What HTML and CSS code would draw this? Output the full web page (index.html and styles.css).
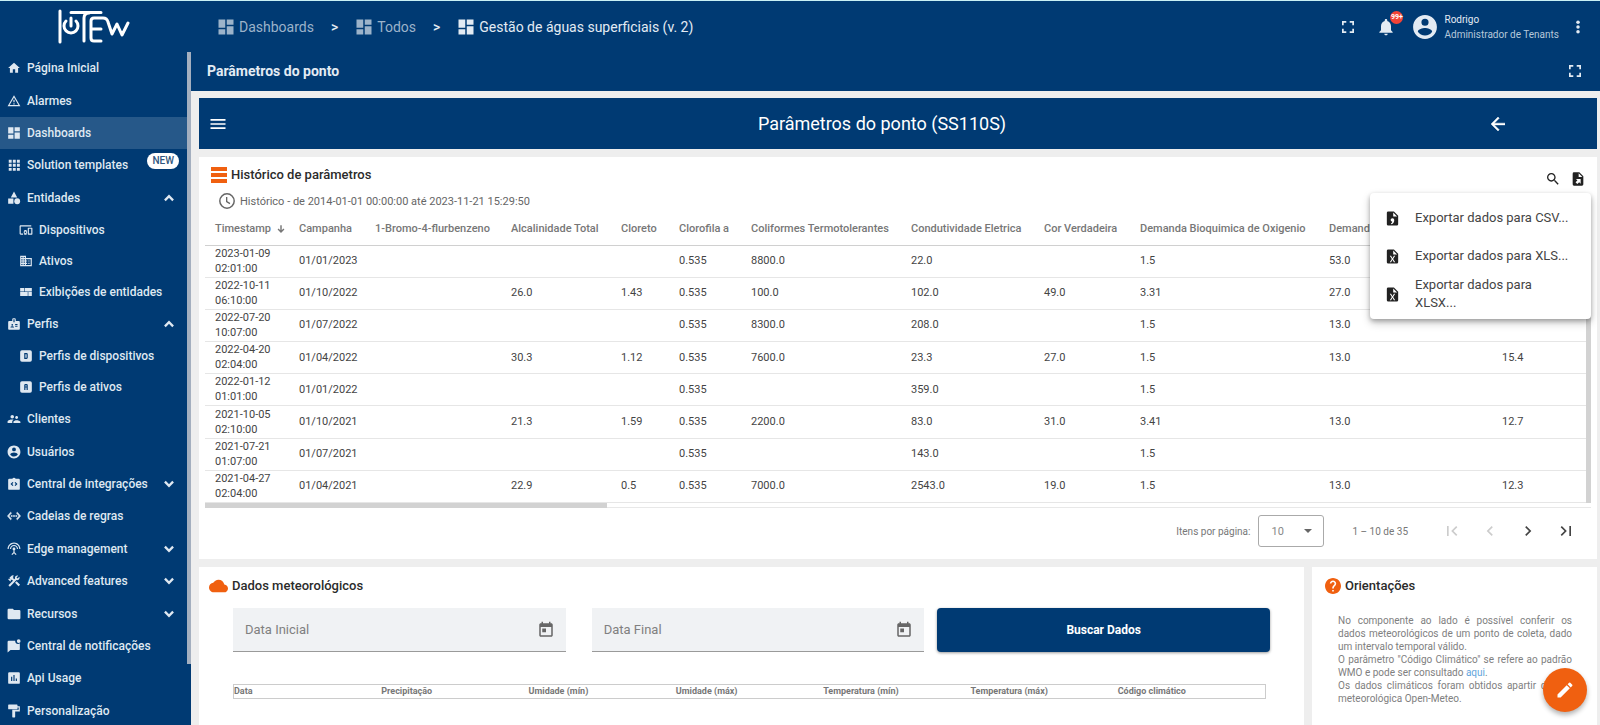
FILE: index.html
```html
<!DOCTYPE html>
<html lang="pt-BR">
<head>
<meta charset="utf-8">
<title>IoTEW - Parâmetros do ponto</title>
<link rel="stylesheet" href="styles.css">
</head>
<body>
<svg class="sprite" aria-hidden="true">
  <symbol id="home" viewBox="0 0 24 24"><path d="M10 20v-6h4v6h5v-8h3L12 3 2 12h3v8z"/></symbol>
  <symbol id="warn" viewBox="0 0 24 24"><path d="M12 5.99L19.53 19H4.47L12 5.99M12 2L1 21h22L12 2zm1 14h-2v2h2v-2zm0-6h-2v4h2v-4z"/></symbol>
  <symbol id="dash" viewBox="0 0 24 24"><path d="M2 13h9V2H2v11zm0 9h9v-7H2v7zm11 0h9V11h-9v11zm0-20v7h9V2h-9z"/></symbol>
  <symbol id="apps" viewBox="0 0 24 24"><path d="M3 3h5v5H3zM10 3h5v5h-5zM17 3h5v5h-5zM3 10h5v5H3zM10 10h5v5h-5zM17 10h5v5h-5zM3 17h5v5H3zM10 17h5v5h-5zM17 17h5v5h-5z"/></symbol>
  <symbol id="category" viewBox="0 0 24 24"><path d="M12 1l-5.500 10h11zM2 13h9v9H2z"/><circle cx="17.500" cy="17.500" r="5"/></symbol>
  <symbol id="devices" viewBox="0 0 24 24"><path d="M3 6h18V4H3c-1.100 0-2 .9-2 2v12c0 1.100.9 2 2 2h4v-2H3V6zm10 6H9v1.780c-.61.55-1 1.330-1 2.220s.39 1.670 1 2.220V20h4v-1.780c.61-.55 1-1.340 1-2.220s-.39-1.670-1-2.220V12zm-2 5.500c-.83 0-1.500-.67-1.500-1.500s.67-1.500 1.500-1.500 1.500.67 1.500 1.500-.67 1.500-1.500 1.500zM22 8h-6c-.5 0-1 .5-1 1v10c0 .5.5 1 1 1h6c.5 0 1-.5 1-1V9c0-.5-.5-1-1-1zm-1 10h-4v-8h4v8z"/></symbol>
  <symbol id="domain" viewBox="0 0 24 24"><path d="M12 7V3H2v18h20V7H12zM6 19H4v-2h2v2zm0-4H4v-2h2v2zm0-4H4V9h2v2zm0-4H4V5h2v2zm4 12H8v-2h2v2zm0-4H8v-2h2v2zm0-4H8V9h2v2zm0-4H8V5h2v2zm10 12h-8v-2h2v-2h-2v-2h2v-2h-2V9h8v10zm-2-8h-2v2h2v-2zm0 4h-2v2h2v-2z"/></symbol>
  <symbol id="quilt" viewBox="0 0 24 24"><path d="M2 5h7v6H2zM10 5h12v6H10zM2 12h13v7H2zM16 12h6v7h-6z"/></symbol>
  <symbol id="badge" viewBox="0 0 24 24"><path d="M20 7h-5V4c0-1.100-.9-2-2-2h-2c-1.100 0-2 .9-2 2v3H4c-1.100 0-2 .9-2 2v11c0 1.100.9 2 2 2h16c1.100 0 2-.9 2-2V9c0-1.100-.9-2-2-2zM9 12c.83 0 1.500.67 1.500 1.500S9.830 15 9 15s-1.500-.67-1.500-1.500S8.170 12 9 12zm3 6H6v-.75c0-1 2-1.500 3-1.500s3 .5 3 1.500V18zm1-9h-2V4h2v5zm5 7.500h-4V15h4v1.500zm0-3h-4V12h4v1.500z"/></symbol>
  <symbol id="boxd" viewBox="0 0 24 24"><path fill-rule="evenodd" d="M9 7v10h4a2 2 0 0 0 2-2V9a2 2 0 0 0-2-2H9zm2 2h2v6h-2zM5 2h14a3 3 0 0 1 3 3v14a3 3 0 0 1-3 3H5a3 3 0 0 1-3-3V5a3 3 0 0 1 3-3z"/></symbol>
  <symbol id="boxa" viewBox="0 0 24 24"><path fill-rule="evenodd" d="M11 7a2 2 0 0 0-2 2v8h2v-4h2v4h2V9a2 2 0 0 0-2-2zm0 2h2v2h-2zM5 2h14a3 3 0 0 1 3 3v14a3 3 0 0 1-3 3H5a3 3 0 0 1-3-3V5a3 3 0 0 1 3-3z"/></symbol>
  <symbol id="people" viewBox="0 0 24 24"><path d="M16.500 12c1.380 0 2.490-1.120 2.490-2.500S17.880 7 16.500 7C15.120 7 14 8.120 14 9.500s1.120 2.500 2.500 2.500zM9 11c1.660 0 2.990-1.340 2.990-3S10.660 5 9 5C7.340 5 6 6.340 6 8s1.340 3 3 3zm7.500 3c-1.830 0-5.500.92-5.500 2.750V19h12v-2.250c0-1.830-4.670-2.750-6.500-2.750zM9 13c-2.330 0-8 1.170-8 3.500V19h8v-2.250c0-.85.33-2.340 2.370-3.470C10.500 13.100 9.660 13 9 13z"/></symbol>
  <symbol id="account" viewBox="0 0 24 24"><path d="M12 1C5.900 1 1 5.900 1 12s4.900 11 11 11 11-4.900 11-11S18.100 1 12 1zm0 3.300a3.300 3.300 0 1 1 0 6.600 3.300 3.300 0 0 1 0-6.600zm0 15.600c-2.750 0-5.180-1.400-6.600-3.540.03-2.190 4.400-3.390 6.600-3.390s6.570 1.200 6.600 3.390A7.900 7.900 0 0 1 12 19.900z"/></symbol>
  <symbol id="integr" viewBox="0 0 24 24"><path fill-rule="evenodd" d="M20 3h-5.200a3 3 0 0 0-5.600 0H4a2 2 0 0 0-2 2v15a2 2 0 0 0 2 2h16a2 2 0 0 0 2-2V5a2 2 0 0 0-2-2zM11 14.200L9.600 15.600 6 12l3.600-3.600L11 9.800 8.800 12zm3.400 1.400L13 14.200l2.200-2.200L13 9.800l1.400-1.400L18 12z"/></symbol>
  <symbol id="rules" viewBox="0 0 24 24"><path d="M7.770 6.760L6.230 5.480.82 12l5.410 6.520 1.540-1.280L3.420 12l4.350-5.240zM7 13h2v-2H7v2zm10-2h-2v2h2v-2zm-6 2h2v-2h-2v2zm6.770-7.520l-1.540 1.280L20.580 12l-4.350 5.240 1.540 1.280L23.180 12l-5.410-6.520z" stroke="currentColor"/></symbol>
  <symbol id="antenna" viewBox="0 0 24 24"><path d="M12 5c-3.870 0-7 3.130-7 7h2c0-2.760 2.240-5 5-5s5 2.240 5 5h2c0-3.870-3.130-7-7-7zm1 9.290c.88-.39 1.500-1.260 1.500-2.290 0-1.380-1.120-2.500-2.500-2.500S9.500 10.620 9.500 12c0 1.020.62 1.900 1.500 2.290v3.300L7.590 21 9 22.410l3-3 3 3L16.410 21 13 17.590v-3.300zM12 1C5.930 1 1 5.930 1 12h2c0-4.970 4.030-9 9-9s9 4.030 9 9h2c0-6.070-4.930-11-11-11z"/></symbol>
  <symbol id="tools" viewBox="0 0 24 24"><path d="M13.800 15.200l2.600-2.600 6 6-2.600 2.600zM17.500 10.500c2.200 0 4-1.570 4-4 0-.58-.16-1.120-.41-1.600l-2.900 2.900-1.890-1.890 2.900-2.900c-.48-.25-1.020-.41-1.600-.41-2.200 0-4 1.570-4 4 0 .41.080.8.210 1.160l-1.450 1.450-1.780-1.780.71-.71-1.410-1.410L12 3.100a3 3 0 0 0-4.240 0L4.220 6.640l1.410 1.410H2.810l-.91.910 3.740 3.740.91-.91V9.150l1.210 1.210.71-.71 1.780 1.780-7.810 7.810 2.520 2.520L16.340 10.290c.36.130.75.210 1.160.21z"/></symbol>
  <symbol id="folder" viewBox="0 0 24 24"><path d="M10 3H3a2 2 0 0 0-2 2v14a2 2 0 0 0 2 2h18a2 2 0 0 0 2-2V7a2 2 0 0 0-2-2h-9z"/></symbol>
  <symbol id="chat" viewBox="0 0 24 24"><path d="M22 7.400V17a2 2 0 0 1-2 2H6l-5 4V5a2 2 0 0 1 2-2h11.100A5 5 0 0 0 19 8.400c1.130 0 2.160-.39 3-1z"/><circle cx="20" cy="3.600" r="3.200"/></symbol>
  <symbol id="chart" viewBox="0 0 24 24"><path d="M20 2H4a2 2 0 0 0-2 2v16a2 2 0 0 0 2 2h16a2 2 0 0 0 2-2V4a2 2 0 0 0-2-2zM9 17H7v-7h2v7zm4 0h-2V7h2v10zm4 0h-2v-4h2v4z"/></symbol>
  <symbol id="paint" viewBox="0 0 24 24"><path d="M18 4V2c0-.55-.45-1-1-1H3c-.55 0-1 .45-1 1v6c0 .55.45 1 1 1h14c.55 0 1-.45 1-1V6h2v4H9v12c0 .55.45 1 1 1h3c.55 0 1-.45 1-1v-9h8V4h-4z"/></symbol>
  <symbol id="up" viewBox="0 0 24 24"><path d="M5 16l7-7 7 7" fill="none" stroke="currentColor" stroke-width="4"/></symbol>
  <symbol id="down" viewBox="0 0 24 24"><path d="M5 8l7 7 7-7" fill="none" stroke="currentColor" stroke-width="4"/></symbol>
  <symbol id="full" viewBox="5 5 14 14"><path d="M7 14H5v5h5v-2H7v-3zm-2-4h2V7h3V5H5v5zm12 7h-3v2h5v-5h-2v3zM14 5v2h3v3h2V5h-5z"/></symbol>
  <symbol id="bell" viewBox="0 0 24 24"><path d="M12 22c1.100 0 2-.9 2-2h-4c0 1.100.89 2 2 2zm6-6v-5c0-3.070-1.640-5.640-4.500-6.320V4c0-.83-.67-1.500-1.500-1.500s-1.500.67-1.500 1.500v.68C7.630 5.360 6 7.920 6 11v5l-2 2v1h16v-1l-2-2z"/></symbol>
  <symbol id="dots" viewBox="0 0 24 24"><circle cx="12" cy="4" r="3"/><circle cx="12" cy="12" r="3"/><circle cx="12" cy="20" r="3"/></symbol>
  <symbol id="menu" viewBox="0 0 24 24"><path d="M3 18h18v-2H3v2zm0-5h18v-2H3v2zm0-7v2h18V6H3z"/></symbol>
  <symbol id="back" viewBox="4 4 16 16"><path d="M20 11H7.830l5.590-5.590L12 4l-8 8 8 8 1.410-1.410L7.830 13H20v-2z" stroke="currentColor" stroke-width=".5"/></symbol>
  <symbol id="search" viewBox="0 0 24 24"><path d="M15.500 14h-.79l-.28-.27C15.410 12.590 16 11.110 16 9.500 16 5.910 13.090 3 9.500 3S3 5.910 3 9.500 5.910 16 9.500 16c1.610 0 3.090-.59 4.230-1.570l.27.28v.79l5 4.990L20.490 19l-4.990-5zm-6 0C7.010 14 5 11.990 5 9.500S7.010 5 9.500 5 14 7.010 14 9.500 11.990 14 9.500 14z"/></symbol>
  <symbol id="export" viewBox="0 0 24 24"><path fill-rule="evenodd" d="M6 2a2 2 0 0 0-2 2v16a2 2 0 0 0 2 2h12a2 2 0 0 0 2-2V8l-6-6zM13 3.500L18.500 9H13zM9 12h7v7l-2.200-2.200-2.800 2.800-2.700-2.700 2.800-2.800z"/></symbol>
  <symbol id="csv" viewBox="0 0 24 24"><path fill-rule="evenodd" d="M6 2a2 2 0 0 0-2 2v16a2 2 0 0 0 2 2h12a2 2 0 0 0 2-2V8l-6-6zM13 3.500L18.500 9H13zM12 11.500a2.500 2.500 0 0 1 2.500 2.500c0 3-1.500 5-4 6.200l-.8-1.300c1.300-.7 1.900-1.500 2-2.400A2.500 2.500 0 0 1 12 11.500z"/></symbol>
  <symbol id="xls" viewBox="0 0 24 24"><path fill-rule="evenodd" d="M6 2a2 2 0 0 0-2 2v16a2 2 0 0 0 2 2h12a2 2 0 0 0 2-2V8l-6-6zM15.800 20H14l-2-3.400-2 3.400H8.200l2.900-4.500L8.200 11H10l2 3.400 2-3.400h1.800l-2.900 4.500zM13 9V3.500L18.500 9z"/></symbol>
  <symbol id="clock" viewBox="0 0 24 24"><circle cx="12" cy="12" r="10.800" fill="none" stroke="currentColor" stroke-width="2.200"/><path d="M11.500 6v7l5 3" fill="none" stroke="currentColor" stroke-width="2"/></symbol>
  <symbol id="sort" viewBox="0 0 24 24"><path d="M12 3v16M5 12l7 7 7-7" fill="none" stroke="currentColor" stroke-width="3.500"/></symbol>
  <symbol id="bars" viewBox="0 0 16 16"><path d="M0 0h16v4H0zM0 6h16v4H0zM0 12h16v4H0z"/></symbol>
  <symbol id="cloud" viewBox="0 4 24 16"><path d="M19.350 10.040C18.670 6.590 15.640 4 12 4 9.110 4 6.600 5.640 5.350 8.040 2.340 8.360 0 10.910 0 14c0 3.310 2.690 6 6 6h13c2.760 0 5-2.240 5-5 0-2.640-2.050-4.780-4.650-4.960z"/></symbol>
  <symbol id="help" viewBox="2 2 20 20"><path d="M12 2C6.480 2 2 6.480 2 12s4.480 10 10 10 10-4.480 10-10S17.520 2 12 2zm1 17h-2v-2h2v2zm2.070-7.750l-.9.920C13.450 12.900 13 13.500 13 15h-2v-.5c0-1.100.45-2.100 1.170-2.830l1.240-1.260c.37-.36.59-.86.59-1.410 0-1.100-.9-2-2-2s-2 .9-2 2H8c0-2.210 1.790-4 4-4s4 1.790 4 4c0 .88-.36 1.680-.93 2.250z"/></symbol>
  <symbol id="cal" viewBox="0 0 24 24"><path d="M19 3h-1V1h-2v2H8V1H6v2H5c-1.110 0-2 .9-2 2v14c0 1.100.89 2 2 2h14c1.100 0 2-.9 2-2V5c0-1.100-.9-2-2-2zm0 16H5V8h14v11zM7 10h5v5H7z"/></symbol>
  <symbol id="edit" viewBox="0 0 24 24"><path d="M3 17.250V21h3.750L17.810 9.940l-3.750-3.750L3 17.250zM20.710 7.040a1 1 0 0 0 0-1.410l-2.340-2.340a1 1 0 0 0-1.410 0l-1.830 1.830 3.750 3.750 1.830-1.830z"/></symbol>
  <symbol id="first" viewBox="0 0 24 24"><path d="M18.400 16.600L13.800 12l4.600-4.600L17 6l-6 6 6 6zM6 6h2v12H6z"/></symbol>
  <symbol id="prev" viewBox="0 0 24 24"><path d="M15.400 7.400L14 6l-6 6 6 6 1.400-1.400L10.800 12z"/></symbol>
  <symbol id="next" viewBox="0 0 24 24"><path d="M10 6L8.600 7.400l4.600 4.600-4.600 4.600L10 18l6-6z"/></symbol>
  <symbol id="last" viewBox="0 0 24 24"><path d="M5.600 7.400l4.600 4.600-4.600 4.600L7 18l6-6-6-6zM16 6h2v12h-2z"/></symbol>
</svg>

<div class="app">
  <aside class="sidebar">
    <a class="logo" href="#" aria-label="IoTEW">
      <svg viewBox="0 0 72 36">
        <path d="M2 2v31"/>
        <path d="M8 12a7 7 0 1 0 10 0M13 9v8"/>
        <path d="M13 3.500h30M26 32V9q0-5 5-5"/>
        <path d="M43 32h-7q-3 0-3-3V12q0-3 3-3h9q4 0 5 4l4 12 5-10 5 11 6-12M33 20h10"/>
      </svg>
    </a>
    <div class="nav-scroll">
      <nav class="nav">
        <a href="#"><svg><use href="#home"/></svg>Página Inicial</a>
        <a href="#"><svg><use href="#warn"/></svg>Alarmes</a>
        <a href="#" class="active"><svg><use href="#dash"/></svg>Dashboards</a>
        <a href="#"><svg><use href="#apps"/></svg>Solution templates<span class="new">NEW</span></a>
        <button type="button"><svg><use href="#category"/></svg>Entidades<svg class="chev"><use href="#up"/></svg></button>
        <a href="#" class="sub"><svg><use href="#devices"/></svg>Dispositivos</a>
        <a href="#" class="sub"><svg><use href="#domain"/></svg>Ativos</a>
        <a href="#" class="sub"><svg><use href="#quilt"/></svg>Exibições de entidades</a>
        <button type="button"><svg><use href="#badge"/></svg>Perfis<svg class="chev"><use href="#up"/></svg></button>
        <a href="#" class="sub"><svg><use href="#boxd"/></svg>Perfis de dispositivos</a>
        <a href="#" class="sub"><svg><use href="#boxa"/></svg>Perfis de ativos</a>
        <a href="#"><svg><use href="#people"/></svg>Clientes</a>
        <a href="#"><svg><use href="#account"/></svg>Usuários</a>
        <button type="button"><svg><use href="#integr"/></svg>Central de integrações<svg class="chev"><use href="#down"/></svg></button>
        <a href="#"><svg><use href="#rules"/></svg>Cadeias de regras</a>
        <button type="button"><svg><use href="#antenna"/></svg>Edge management<svg class="chev"><use href="#down"/></svg></button>
        <button type="button"><svg><use href="#tools"/></svg>Advanced features<svg class="chev"><use href="#down"/></svg></button>
        <button type="button"><svg><use href="#folder"/></svg>Recursos<svg class="chev"><use href="#down"/></svg></button>
        <a href="#"><svg><use href="#chat"/></svg>Central de notificações</a>
        <a href="#"><svg><use href="#chart"/></svg>Api Usage</a>
        <a href="#"><svg><use href="#paint"/></svg>Personalização</a>
      </nav>
      <div class="nav-track"><div class="nav-thumb"></div></div>
    </div>
  </aside>

  <div class="page">
    <header class="topbar">
      <nav class="crumbs">
        <a href="#"><svg><use href="#dash"/></svg>Dashboards</a><span class="sep">&gt;</span>
        <a href="#"><svg><use href="#dash"/></svg>Todos</a><span class="sep">&gt;</span>
        <a href="#" class="current"><svg><use href="#dash"/></svg>Gestão de águas superficiais (v. 2)</a>
      </nav>
      <div class="tools">
        <button type="button" aria-label="Tela cheia"><svg class="i12"><use href="#full"/></svg></button>
        <button type="button" class="bell" aria-label="Notificações"><svg class="i20"><use href="#bell"/></svg><span class="count">99+</span></button>
        <div class="user"><svg><use href="#account"/></svg><div>Rodrigo<span class="role">Administrador de Tenants</span></div></div>
        <button type="button" class="more" aria-label="Mais"><svg class="i14"><use href="#dots"/></svg></button>
      </div>
    </header>
    <div class="statebar">
      <h1>Parâmetros do ponto</h1>
      <button type="button" aria-label="Expandir"><svg class="i12"><use href="#full"/></svg></button>
    </div>

    <main class="board">
      <section class="banner">
        <button type="button" aria-label="Menu"><svg class="i20"><use href="#menu"/></svg></button>
        <h2>Parâmetros do ponto (SS110S)</h2>
        <button type="button" aria-label="Voltar"><svg class="i14"><use href="#back"/></svg></button>
      </section>

      <section class="card history">
        <div class="card-head">
          <h3><svg class="i16"><use href="#bars"/></svg>Histórico de parâmetros</h3>
          <div class="actions">
            <button type="button" aria-label="Buscar"><svg class="i16"><use href="#search"/></svg></button>
            <button type="button" aria-label="Exportar"><svg class="i16"><use href="#export"/></svg></button>
            <div class="export-menu" role="menu">
              <button type="button" role="menuitem"><svg><use href="#csv"/></svg><span>Exportar dados para CSV...</span></button>
              <button type="button" role="menuitem"><svg><use href="#xls"/></svg><span>Exportar dados para XLS...</span></button>
              <button type="button" role="menuitem"><svg><use href="#xls"/></svg><span>Exportar dados para XLSX...</span></button>
            </div>
          </div>
        </div>
        <div class="period"><svg class="i16"><use href="#clock"/></svg>Histórico - de 2014-01-01 00:00:00 até 2023-11-21 15:29:50</div>
        <div class="grid-wrap">
          <div class="grid-view">
            <table class="grid">
              <colgroup><col class="w84"><col class="w76"><col class="w136"><col class="w110"><col class="w58"><col class="w72"><col class="w160"><col class="w133"><col class="w96"><col class="w189"><col class="w173"><col></colgroup>
              <thead><tr><th><span class="sorted">Timestamp<svg><use href="#sort"/></svg></span></th><th>Campanha</th><th>1-Bromo-4-flurbenzeno</th><th>Alcalinidade Total</th><th>Cloreto</th><th>Clorofila a</th><th>Coliformes Termotolerantes</th><th>Condutividade Eletrica</th><th>Cor Verdadeira</th><th>Demanda Bioquimica de Oxigenio</th><th>Demanda Quimica de Oxigenio</th><th></th></tr></thead>
              <tbody>
                <tr><td>2023-01-09 02:01:00</td><td>01/01/2023</td><td></td><td></td><td></td><td>0.535</td><td>8800.0</td><td>22.0</td><td></td><td>1.5</td><td>53.0</td><td></td></tr>
                <tr><td>2022-10-11 06:10:00</td><td>01/10/2022</td><td></td><td>26.0</td><td>1.43</td><td>0.535</td><td>100.0</td><td>102.0</td><td>49.0</td><td>3.31</td><td>27.0</td><td></td></tr>
                <tr><td>2022-07-20 10:07:00</td><td>01/07/2022</td><td></td><td></td><td></td><td>0.535</td><td>8300.0</td><td>208.0</td><td></td><td>1.5</td><td>13.0</td><td></td></tr>
                <tr><td>2022-04-20 02:04:00</td><td>01/04/2022</td><td></td><td>30.3</td><td>1.12</td><td>0.535</td><td>7600.0</td><td>23.3</td><td>27.0</td><td>1.5</td><td>13.0</td><td>15.4</td></tr>
                <tr><td>2022-01-12 01:01:00</td><td>01/01/2022</td><td></td><td></td><td></td><td>0.535</td><td></td><td>359.0</td><td></td><td>1.5</td><td></td><td></td></tr>
                <tr><td>2021-10-05 02:10:00</td><td>01/10/2021</td><td></td><td>21.3</td><td>1.59</td><td>0.535</td><td>2200.0</td><td>83.0</td><td>31.0</td><td>3.41</td><td>13.0</td><td>12.7</td></tr>
                <tr><td>2021-07-21 01:07:00</td><td>01/07/2021</td><td></td><td></td><td></td><td>0.535</td><td></td><td>143.0</td><td></td><td>1.5</td><td></td><td></td></tr>
                <tr><td>2021-04-27 02:04:00</td><td>01/04/2021</td><td></td><td>22.9</td><td>0.5</td><td>0.535</td><td>7000.0</td><td>2543.0</td><td>19.0</td><td>1.5</td><td>13.0</td><td>12.3</td></tr>
              </tbody>
            </table>
            <div class="vbar"></div>
          </div>
          <div class="hbar"><div class="hthumb"></div></div>
        </div>
        <div class="pager">
          <label for="size">Itens por página:</label>
          <div class="select"><select id="size"><option>10</option></select></div>
          <span class="range">1 – 10 de 35</span>
          <div class="pages">
            <button type="button" disabled aria-label="Primeira página"><svg class="i20"><use href="#first"/></svg></button>
            <button type="button" disabled aria-label="Página anterior"><svg class="i20"><use href="#prev"/></svg></button>
            <button type="button" aria-label="Próxima página"><svg class="i20"><use href="#next"/></svg></button>
            <button type="button" aria-label="Última página"><svg class="i20"><use href="#last"/></svg></button>
          </div>
        </div>
      </section>

      <div class="lower">
        <section class="card weather">
          <h3><svg class="cloud"><use href="#cloud"/></svg>Dados meteorológicos</h3>
          <form class="fields">
            <div class="field"><input type="text" placeholder="Data Inicial" aria-label="Data Inicial"><button type="button" aria-label="Abrir calendário da data inicial"><svg class="i18"><use href="#cal"/></svg></button></div>
            <div class="field"><input type="text" placeholder="Data Final" aria-label="Data Final"><button type="button" aria-label="Abrir calendário da data final"><svg class="i18"><use href="#cal"/></svg></button></div>
            <button type="button" class="submit">Buscar Dados</button>
          </form>
          <table class="wx"><thead><tr><th>Data</th><th>Precipitação</th><th>Umidade (mín)</th><th>Umidade (máx)</th><th>Temperatura (mín)</th><th>Temperatura (máx)</th><th>Código climático</th></tr></thead></table>
        </section>
        <section class="card guide">
          <h3><svg class="i16"><use href="#help"/></svg>Orientações</h3>
          <div class="text">
            <p>No componente ao lado é possível conferir os dados&nbsp;meteorológicos de um ponto de coleta, dado um&nbsp;intervalo temporal válido.</p>
            <p>O parâmetro "Código Climático" se refere ao padrão WMO e pode ser consultado <a href="#">aqui</a>.</p>
            <p>Os dados climáticos foram obtidos apartir da API meteorológica Open-Meteo.</p>
          </div>
        </section>
      </div>
    </main>
  </div>
  <button type="button" class="fab" aria-label="Editar"><svg class="i20"><use href="#edit"/></svg></button>
</div>
</body>
</html>
```

FILE: styles.css
```css
* { box-sizing: border-box; }

body {
  margin: 0;
  font-family: Roboto, "Liberation Sans", sans-serif;
  font-size: 12px;
  color: #333;
  background: #eee;
}

h1, h2, h3, p { margin: 0; }
a { color: inherit; text-decoration: none; }
svg { fill: currentColor; flex: none; }

button {
  display: flex;
  align-items: center;
  justify-content: center;
  padding: 0;
  border: 0;
  background: none;
  color: inherit;
  font: inherit;
}

.sprite { position: absolute; width: 0; height: 0; }
.i12 { width: 12px; height: 12px; }
.i14 { width: 14px; height: 14px; }
.i16 { width: 16px; height: 16px; }
.i18 { width: 18px; height: 18px; }
.i20 { width: 20px; height: 20px; }

.app {
  display: flex;
  height: 100vh;
  overflow: hidden;
  border-top: 1px solid #c9f0f5;
}

/* Sidebar */
.sidebar {
  display: flex;
  flex-direction: column;
  flex: none;
  width: 191px;
  background: #003a73;
  color: #dfe8f1;
}
.logo {
  display: flex;
  flex: none;
  justify-content: center;
  height: 51px;
  padding: 8px 4px 0 0;
  color: #fff;
}
.logo svg {
  width: 72px;
  height: 36px;
  fill: none;
  stroke: currentColor;
  stroke-width: 3;
  stroke-linecap: round;
  stroke-linejoin: round;
}
.nav-scroll { display: flex; flex: 1; min-height: 0; }
.nav {
  display: flex;
  flex-direction: column;
  flex: 1;
  min-height: calc(100% + 2px);
  align-self: flex-start;
}
.nav a, .nav button {
  display: flex;
  flex: 1 0 32px;
  align-items: center;
  justify-content: flex-start;
  gap: 6px;
  padding: 0 11px 0 7px;
  font-weight: 500;
  white-space: nowrap;
}
.nav svg { width: 14px; height: 14px; }
.nav .sub { flex-basis: 31px; padding-left: 19px; }
.nav .active { background: #265889; }
.nav .chev { margin-left: auto; }
.nav .new {
  align-self: flex-start;
  margin: 4px -3px 0 auto;
  padding: 0 5px;
  border-radius: 8px;
  background: #fff;
  color: #305680;
  font-size: 10px;
  line-height: 16px;
}
.nav-track { width: 4px; }
.nav-thumb { height: 91%; background: #a4afbf; }

/* Header */
.page { display: flex; flex-direction: column; flex: 1; min-width: 0; }
.topbar {
  display: flex;
  flex: none;
  align-items: center;
  justify-content: space-between;
  height: 51px;
  padding: 0 15px 0 26px;
  background: #003a73;
  color: #e3ebf3;
}
.crumbs { display: flex; align-items: center; font-size: 14px; }
.crumbs a { display: flex; align-items: center; gap: 4px; color: #9cb3ca; }
.crumbs a.current { color: #e3ebf3; }
.crumbs svg { width: 18px; height: 18px; }
.sep { padding: 0 17px; font-weight: 500; }
.tools { display: flex; align-items: center; }
.bell { position: relative; margin: 0 16px 0 22px; }
.count {
  position: absolute;
  top: -6px;
  right: -7px;
  width: 13px;
  height: 13px;
  border-radius: 50%;
  background: #f44336;
  color: #fff;
  font-size: 7px;
  font-weight: 700;
  line-height: 13px;
}
.user { display: flex; align-items: center; gap: 6px; font-size: 10px; line-height: 15px; }
.user svg { width: 26px; height: 26px; }
.role { display: block; color: #b6c8da; }
.more { margin-left: 12px; }
.statebar {
  display: flex;
  flex: none;
  align-items: center;
  justify-content: space-between;
  height: 39px;
  padding: 0 19px 2px 16px;
  background: #003a73;
  color: #e3ebf3;
}
.statebar h1 { font-size: 14px; font-weight: 700; }

/* Board */
.board {
  display: flex;
  flex-direction: column;
  flex: 1;
  gap: 8px;
  min-height: 0;
  padding: 7px 3px 0 8px;
}
.banner {
  display: grid;
  flex: none;
  grid-template-columns: 88px 1fr 120px;
  align-items: center;
  height: 51px;
  background: #003a73;
  color: #fff;
}
.banner button { justify-content: flex-start; padding-left: 9px; }
.banner button:last-child { padding-left: 14px; }
.banner h2 { font-size: 18px; font-weight: 400; text-align: center; }

.card { background: #fff; }
.card h3 {
  display: flex;
  align-items: center;
  gap: 4px;
  color: #2b2b2b;
  font-size: 13px;
  font-weight: 500;
  line-height: 20px;
}
.card h3 svg { color: #f06010; }
.history { flex: none; padding: 8px 6px 0; }
.card-head { display: flex; align-items: flex-start; justify-content: space-between; padding: 0 5px 0 6px; }
.actions { position: relative; display: flex; gap: 9px; padding-top: 6px; color: #222; }
.period {
  display: flex;
  align-items: center;
  gap: 5px;
  height: 26px;
  padding: 2px 0 0 14px;
  color: #666;
  font-size: 11px;
}
.export-menu {
  position: absolute;
  top: 28px;
  right: -5px;
  z-index: 2;
  width: 221px;
  padding: 6px 0;
  border-radius: 4px;
  background: #fff;
  box-shadow: 0 2px 4px rgba(0, 0, 0, .24), 0 4px 9px rgba(0, 0, 0, .22);
}
.export-menu button {
  justify-content: flex-start;
  gap: 14px;
  width: 100%;
  height: 38px;
  padding: 0 18px 0 14px;
  color: #444;
  font-size: 13px;
  line-height: 18px;
  text-align: left;
}
.export-menu svg { width: 17px; height: 17px; color: #222; }

/* History table */
.grid-view { display: flex; overflow: hidden; }
.grid {
  flex: 1;
  height: 290px;
  width: 100%;
  min-width: 0;
  border-collapse: collapse;
  table-layout: fixed;
  font-size: 11px;
  line-height: 15px;
}
.grid th, .grid td { height: 32px; padding: 0 0 0 10px; text-align: left; border-bottom: 1px solid #e6e6e6; }
.grid th { color: #777; font-weight: 500; white-space: nowrap; border-bottom-color: #d0d0d0; }
.grid td { padding-bottom: 1px; color: #444; }
.sorted { display: flex; align-items: center; gap: 5px; }
.sorted svg { width: 10px; height: 10px; }
.w58 { width: 58px; }
.w72 { width: 72px; }
.w76 { width: 76px; }
.w84 { width: 84px; }
.w96 { width: 96px; }
.w110 { width: 110px; }
.w133 { width: 133px; }
.w136 { width: 136px; }
.w160 { width: 160px; }
.w173 { width: 173px; }
.w189 { width: 189px; }
.vbar { flex: none; width: 5px; background: #d2d2d2; }
.hbar { height: 5px; border-bottom: 1px solid #e8e8e8; }
.hthumb { width: 29%; height: 5px; background: #d2d2d2; }

.pager {
  display: flex;
  align-items: center;
  justify-content: flex-end;
  height: 51px;
  padding: 0 15px 5px 0;
  color: #777;
  font-size: 10px;
}
.select {
  position: relative;
  margin: 0 28px 0 8px;
}
.select::after {
  content: "";
  position: absolute;
  top: 14px;
  right: 12px;
  border: 4px solid transparent;
  border-top-color: #666;
  border-bottom: 0;
}
.select select {
  width: 66px;
  height: 32px;
  padding: 0 12px;
  border: 1px solid #aaa;
  border-radius: 3px;
  appearance: none;
  background: #fff;
  color: #888;
  font: inherit;
  font-size: 11px;
}
.range { margin-right: 34px; }
.pages { display: flex; gap: 18px; color: #444; }
.pages button:disabled { color: #ccc; }

/* Lower row */
.lower { display: grid; flex: 1; grid-template-columns: minmax(0, 1fr) 285px; gap: 8px; min-height: 0; }
.weather { padding: 9px 34px 0; }
.weather h3 { margin-left: -24px; }
.cloud { width: 19px; height: 14px; }
.fields {
  display: grid;
  grid-template-columns: minmax(0, 1fr) 26px minmax(0, 1fr) 13px minmax(0, 1fr);
  margin-top: 12px;
}
.field {
  display: flex;
  align-items: center;
  padding-right: 11px;
  border-bottom: 1px solid #9a9a9a;
  background: #f0f2f4;
  color: #666;
}
.field:nth-child(2) { grid-column: 3; }
.field input {
  flex: 1;
  min-width: 0;
  height: 43px;
  padding: 0 12px;
  border: 0;
  background: none;
  font: inherit;
  font-size: 13px;
}
.field input::placeholder { color: #808080; opacity: 1; }
.submit {
  grid-column: 5;
  height: 44px;
  border-radius: 4px;
  background: #003a73;
  box-shadow: 0 1px 3px rgba(0, 0, 0, .4);
  color: #fff;
  font-weight: 700;
}
.wx {
  width: calc(100% - 4px);
  margin-top: 32px;
  border: 1px solid #ccc;
  border-spacing: 0;
  table-layout: fixed;
  color: #777;
  font-size: 9px;
  line-height: 13px;
}
.wx th { padding: 0; text-align: left; font-weight: 700; }
.guide { padding: 9px 13px; }
.guide .text {
  margin-top: 18px;
  padding: 0 12px 0 13px;
  color: #808080;
  font-size: 10px;
  line-height: 13px;
  text-align: justify;
}
.guide a { color: #62a5dc; }

.fab {
  position: absolute;
  right: 13px;
  bottom: 13px;
  width: 44px;
  height: 44px;
  border-radius: 50%;
  background: #f06010;
  box-shadow: 0 3px 5px rgba(0, 0, 0, .3);
  color: #fff;
}
```
